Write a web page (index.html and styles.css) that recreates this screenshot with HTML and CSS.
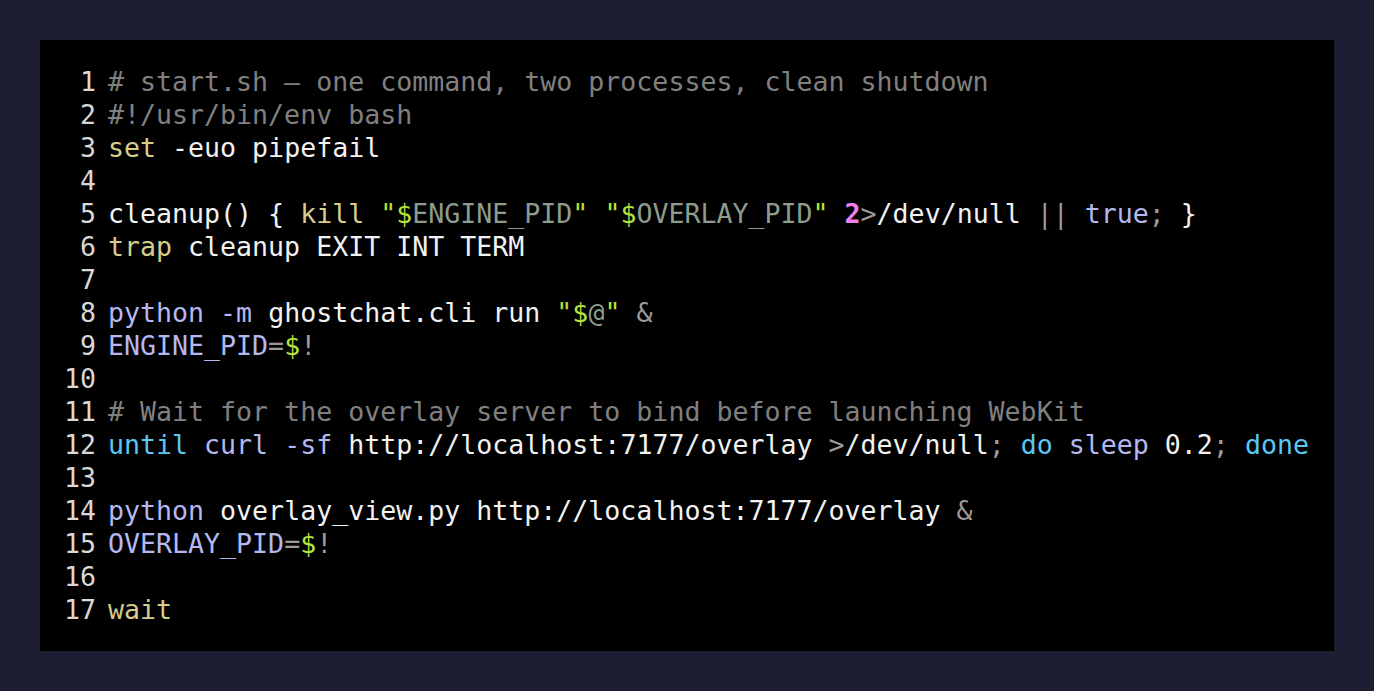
FILE: index.html
```html
<!DOCTYPE html>
<html>
<head>
<meta charset="utf-8">
<link rel="stylesheet" href="styles.css">
</head>
<body>
<pre class="code"><div class="line"><span class="ln">1</span><span class="c"># start.sh — one command, two processes, clean shutdown</span></div><div class="line"><span class="ln">2</span><span class="c">#!/usr/bin/env bash</span></div><div class="line"><span class="ln">3</span><span class="k">set</span> -euo pipefail</div><div class="line"><span class="ln">4</span></div><div class="line"><span class="ln">5</span>cleanup() { <span class="k">kill</span> <span class="s">"$</span><span class="v">ENGINE_PID</span><span class="s">"</span> <span class="s">"$</span><span class="v">OVERLAY_PID</span><span class="s">"</span> <span class="n">2</span><span class="p">&gt;</span>/dev/null <span class="p">||</span> <span class="l">true</span><span class="p">;</span> }</div><div class="line"><span class="ln">6</span><span class="k">trap</span> cleanup EXIT INT TERM</div><div class="line"><span class="ln">7</span></div><div class="line"><span class="ln">8</span><span class="l">python</span> <span class="l">-m</span> ghostchat.cli run <span class="s">"$</span><span class="v">@</span><span class="s">"</span> <span class="p">&amp;</span></div><div class="line"><span class="ln">9</span><span class="l">ENGINE_PID</span><span class="p">=</span><span class="s">$</span><span class="p">!</span></div><div class="line"><span class="ln">10</span></div><div class="line"><span class="ln">11</span><span class="c"># Wait for the overlay server to bind before launching WebKit</span></div><div class="line"><span class="ln">12</span><span class="b">until</span> <span class="l">curl</span> <span class="l">-sf</span> http://localhost:7177/overlay <span class="p">&gt;</span>/dev/null<span class="p">;</span> <span class="b">do</span> <span class="l">sleep</span> 0.2<span class="p">;</span> <span class="b">done</span></div><div class="line"><span class="ln">13</span></div><div class="line"><span class="ln">14</span><span class="l">python</span> overlay_view.py http://localhost:7177/overlay <span class="p">&amp;</span></div><div class="line"><span class="ln">15</span><span class="l">OVERLAY_PID</span><span class="p">=</span><span class="s">$</span><span class="p">!</span></div><div class="line"><span class="ln">16</span></div><div class="line"><span class="ln">17</span><span class="k">wait</span></div></pre>
</body>
</html>
```

FILE: styles.css
```css
html, body {
  margin: 0;
  padding: 0;
}
body {
  background: #1d1e32;
  padding: 40px;
  height: 691px;
  box-sizing: border-box;
}
.code {
  margin: 0;
  background: #000;
  padding: 25px 24px;
  height: 611px;
  box-sizing: border-box;
  font-family: "DejaVu Sans Mono", monospace;
  font-size: 26.6px;
  line-height: 33px;
  color: #f2f2f2;
  white-space: pre;
}
.line {
  display: block;
  height: 33px;
}
.ln {
  display: inline-block;
  width: 32px;
  margin-right: 12px;
  text-align: right;
  color: #d8d8d8;
}
.c { color: #808080; }
.k { color: #d6cc8c; }
.s { color: #b6e23e; }
.v { color: #8c9c8e; }
.p { color: #9a9a9a; }
.n { color: #f07ef2; font-weight: bold; }
.l { color: #b5b8f0; }
.b { color: #5cc6f2; }
```
